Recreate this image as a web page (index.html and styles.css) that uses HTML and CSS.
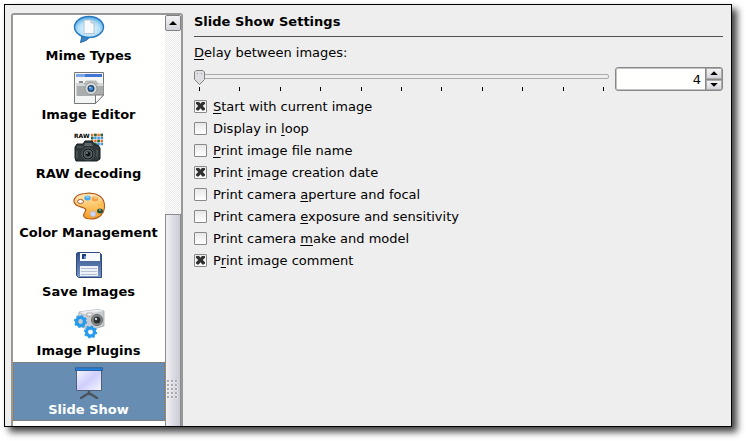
FILE: index.html
```html
<!DOCTYPE html>
<html lang="en">
<head>
    <meta charset="UTF-8">
    <meta name="viewport" content="width=device-width, initial-scale=1.0">
    <title>Slide Show Settings</title>
    <link rel="stylesheet" href="styles.css">
</head>
<body>
    <div class="window">
        <nav class="sidebar">
            <ul class="pages">
                <li><a href="#mime" class="page">
                    <svg class="icon" viewBox="0 0 32 32">
                        <defs>
                            <radialGradient id="bubble" cx=".5" cy=".6" r=".6"><stop offset="0" stop-color="#f2fbff"/><stop offset=".6" stop-color="#b4e0fa"/><stop offset="1" stop-color="#4ba3e4"/></radialGradient>
                        </defs>
                        <path d="M9 23L7.500 29.500Q14 28 17 24Z" fill="#3b84c8" stroke="#2466a8"/>
                        <ellipse cx="16" cy="14" rx="14.5" ry="10.5" fill="url(#bubble)" stroke="#2878bd" stroke-width="1.4"/>
                        <path d="M11 7H18L21 10V20.500H11Z" fill="#f8fafc" stroke="#a9b9c9" stroke-width=".8"/>
                        <path d="M18 7V10H21" fill="#dde5ec" stroke="#a9b9c9" stroke-width=".8"/>
                    </svg>
                    <span>Mime Types</span>
                </a></li>
                <li><a href="#editor" class="page">
                    <svg class="icon" viewBox="0 0 32 32">
                        <path d="M1.500 .5H30.500V23L22.500 31.500H1.500Z" fill="#f3f4f4" stroke="#777"/>
                        <path d="M3 2H29V5H3Z" fill="#3f76d4"/>
                        <path d="M3 2H12V5H3Z" fill="#7ba6e6"/>
                        <path d="M6 9H10V11H6Z" fill="#888"/>
                        <rect x="3.500" y="11" width="27" height="13" fill="#a9adad"/>
                        <path d="M3.500 11H30V14H3.500Z" fill="#d5d8d8"/>
                        <path d="M13 9H23L25 12H11Z" fill="#c3c7c7" stroke="#999" stroke-width=".6"/>
                        <circle cx="18" cy="16.500" r="6" fill="#d6dada" stroke="#888" stroke-width=".8"/>
                        <circle cx="18" cy="16.500" r="3.500" fill="#27486f"/>
                        <circle cx="18" cy="16.500" r="2" fill="#3f8ed8"/>
                        <circle cx="17" cy="15.500" r=".8" fill="#c8e8ff"/>
                        <path d="M22.500 31.500V23H30.500Z" fill="#fff" stroke="#777"/>
                    </svg>
                    <span>Image Editor</span>
                </a></li>
                <li><a href="#raw" class="page">
                    <svg class="icon" viewBox="0 0 32 32">
                        <text x="1" y="7" class="raw-text">RAW</text>
                        <path d="M18 4H30M18 10H30" stroke="#e2702c" stroke-width="2.400" stroke-dasharray="2.400 .8"/>
                        <path d="M18 7H30M18 13H30" stroke="#3e96e4" stroke-width="2.400" stroke-dasharray="2.400 .8"/>
                        <path d="M21.200 4H23.600M27.600 4H30M18 7H20.400M24.400 10H26.800M21.200 13H23.600" stroke="#226a40" stroke-width="2.400"/>
                        <path d="M2 16L4 13H10L12 10H19L22 14H25L27 17V28L24 30H3L2 27Z" fill="#30383b" stroke="#171c1f"/>
                        <path d="M12 12H18L20 15H11Z" fill="#5b6669"/>
                        <path d="M4 16H10M4 20V27M24 19V26" stroke="#4c585c" stroke-width="1.500"/>
                        <circle cx="15" cy="23" r="6" fill="#111719" stroke="#59666a"/>
                        <circle cx="15" cy="23" r="4" fill="#37454a" stroke="#7c888c" stroke-width=".7"/>
                        <circle cx="15" cy="23" r="2" fill="#0a1013"/>
                        <circle cx="14" cy="22" r=".8" fill="#b6c9d0"/>
                    </svg>
                    <span>RAW decoding</span>
                </a></li>
                <li><a href="#color" class="page">
                    <svg class="icon" viewBox="0 0 32 32">
                        <defs>
                            <linearGradient id="palette" x1="0" y1="0" x2="0" y2="1"><stop offset="0" stop-color="#ffe9bd"/><stop offset=".6" stop-color="#fbbd55"/><stop offset="1" stop-color="#f39a24"/></linearGradient>
                        </defs>
                        <path d="M3 15C-2 10 3 4 12 3.500C24 2 31.500 7 31.500 16C31.500 24 26 29 18 29C11 29 9 26 12 22C15 17 8 18 3 15Z" fill="url(#palette)" stroke="#b25a1c" stroke-width="1.200"/>
                        <ellipse cx="7.500" cy="11.500" rx="3" ry="2" fill="#fffefc" stroke="#a3592b"/>
                        <ellipse cx="14.500" cy="8" rx="3.200" ry="2.500" fill="#46acf2"/>
                        <ellipse cx="22" cy="9" rx="3.200" ry="2.500" fill="#f3a03d"/>
                        <ellipse cx="27.500" cy="14" rx="2.700" ry="2.700" fill="#ffbb45"/>
                        <ellipse cx="27" cy="21" rx="3" ry="2.500" fill="#23513a"/>
                        <circle cx="20" cy="24" r="2.800" fill="#d0d5f8" stroke="#a8aede" stroke-width=".6"/>
                        <path d="M13 7H16M21 8H24M26 13H28M26 20H28" stroke="#fff" stroke-width="1" opacity=".7"/>
                    </svg>
                    <span>Color Management</span>
                </a></li>
                <li><a href="#save" class="page">
                    <svg class="icon" viewBox="0 0 32 32">
                        <defs>
                            <linearGradient id="disk" x1="0" y1="0" x2="0" y2="1"><stop offset="0" stop-color="#2f4f8d"/><stop offset="1" stop-color="#7d98c4"/></linearGradient>
                        </defs>
                        <path d="M4.500 3.500H26.500L28.500 5.500V28.500H5.500L3.500 26.500V4.500Z" fill="url(#disk)" stroke="#304a7d"/>
                        <path d="M7 4H27V12H7Z" fill="#f8f9fc"/>
                        <path d="M9 5H13V10H9Z" fill="#1e3c78"/>
                        <path d="M11 7H13V10H11Z" fill="#7798ce"/>
                        <path d="M7 17H25V27H7Z" fill="#eef1f8"/>
                        <path d="M8 19.500H24M8 22.500H24M8 25.500H24" stroke="#b4bfd6"/>
                    </svg>
                    <span>Save Images</span>
                </a></li>
                <li><a href="#plugins" class="page">
                    <svg class="icon" viewBox="0 0 32 32">
                        <path d="M6 4L25 1.500L31 3V18L18 22L5 18Z" fill="#c8cbcf" stroke="#a5a9ad" stroke-width=".8"/>
                        <path d="M6 4L25 1.500L31 3L12 6Z" fill="#eceef0"/>
                        <path d="M14 5H19V8H14Z" fill="#fafafa" stroke="#888" stroke-width=".6"/>
                        <circle cx="24" cy="12" r="5.500" fill="#8b8e8d" stroke="#666"/>
                        <circle cx="24" cy="12" r="3.500" fill="#292e30"/>
                        <circle cx="23" cy="11" r="1.200" fill="#cfd8d9"/>
                        <circle cx="7.500" cy="13.500" r="4" fill="none" stroke="#249bed" stroke-width="3.200"/>
                        <circle cx="7.500" cy="13.500" r="5.800" fill="none" stroke="#249bed" stroke-width="1.600" stroke-dasharray="2.200 2.300"/>
                        <circle cx="17.500" cy="24" r="4" fill="none" stroke="#249bed" stroke-width="3.200"/>
                        <circle cx="17.500" cy="24" r="5.800" fill="none" stroke="#249bed" stroke-width="1.600" stroke-dasharray="2.200 2.300"/>
                    </svg>
                    <span>Image Plugins</span>
                </a></li>
                <li><a href="#slideshow" class="page selected">
                    <svg class="icon" viewBox="0 0 32 32">
                        <defs>
                            <linearGradient id="screen" x1="0" y1="0" x2="1" y2="1"><stop offset="0" stop-color="#f5f5ff"/><stop offset=".5" stop-color="#cfcffd"/><stop offset="1" stop-color="#f6f6ff"/></linearGradient>
                        </defs>
                        <path d="M16 23V27M16 26L8 31M16 26L24 31" fill="none" stroke="#4c535d" stroke-width="2.400" stroke-linecap="round"/>
                        <path d="M3.500 3H28.500V23.500H3.500Z" fill="url(#screen)" stroke="#525f79"/>
                        <path d="M2.500 .8H29.500V3.500H2.500Z" fill="#2482dc" stroke="#23528c" stroke-width=".8"/>
                    </svg>
                    <span>Slide Show</span>
                </a></li>
            </ul>
            <div class="scrollbar">
                <button type="button" class="scroll-up" aria-label="Scroll up"><i class="arrow up"></i></button>
                <div class="scroll-thumb"><div class="grip"></div></div>
            </div>
        </nav>
        <form class="settings">
            <h1>Slide Show Settings</h1>
            <label class="delay-label" for="delay"><u>D</u>elay between images:</label>
            <div class="delay">
                <div class="slider">
                    <input type="range" id="delay" min="4" max="3600" value="4">
                    <div class="ticks">
                        <i></i><i></i><i></i><i></i><i></i><i></i><i></i><i></i><i></i><i></i><i></i>
                    </div>
                </div>
                <div class="spinbox">
                    <input type="text" id="seconds" value="4" aria-label="Delay in seconds">
                    <div class="steps">
                        <button type="button" id="stepUp" aria-label="Increase"><i class="arrow up"></i></button>
                        <button type="button" id="stepDown" aria-label="Decrease"><i class="arrow down"></i></button>
                    </div>
                </div>
            </div>
            <div class="options">
                <label><input type="checkbox" checked><span><u>S</u>tart with current image</span></label>
                <label><input type="checkbox"><span>Display in <u>l</u>oop</span></label>
                <label><input type="checkbox"><span><u>P</u>rint image file name</span></label>
                <label><input type="checkbox" checked><span>Print <u>i</u>mage creation date</span></label>
                <label><input type="checkbox"><span>Print camera <u>a</u>perture and focal</span></label>
                <label><input type="checkbox"><span>Print camera <u>e</u>xposure and sensitivity</span></label>
                <label><input type="checkbox"><span>Print camera <u>m</u>ake and model</span></label>
                <label><input type="checkbox" checked><span>P<u>r</u>int image comment</span></label>
            </div>
        </form>
    </div>
    <script>
        var slider = document.getElementById("delay");
        var seconds = document.getElementById("seconds");

        // Keep the slider and the number box on the same value
        function setDelay(value) {
            slider.value = value;
            seconds.value = slider.value;
        }

        slider.addEventListener("input", function() {
            setDelay(slider.value);
        });
        seconds.addEventListener("change", function() {
            setDelay(seconds.value);
        });
        document.getElementById("stepUp").addEventListener("click", function() {
            setDelay(Number(slider.value) + 1);
        });
        document.getElementById("stepDown").addEventListener("click", function() {
            setDelay(Number(slider.value) - 1);
        });
    </script>
</body>
</html>
```
FILE: styles.css
```css
* {
    box-sizing: border-box;
}
body {
    margin: 0;
    padding: 4px 14px 14px 4px; /* Room for the window shadow */
    height: 100vh;
    background-color: #fff;
    color: #000;
    font-family: "DejaVu Sans", sans-serif;
    font-size: 13px;
    line-height: 16px;
}
.window {
    display: flex;
    gap: 11px;
    height: 100%;
    padding: 8px 8px 0 6px;
    border: 1px solid #000;
    background-color: #eee;
    box-shadow: 5px 5px 7px rgba(0, 0, 0, 0.75);
    overflow: hidden;
}
/* Page list */
.sidebar {
    display: flex;
    flex: none;
    width: 172px;
    border: 2px solid #989898;
    border-bottom: none;
    border-radius: 3px 3px 0 0;
    background-color: #fffffd;
    overflow: hidden;
}
.pages {
    flex: 1;
    margin: -7px 0 0; /* List is scrolled past the first pages */
    padding: 0;
    list-style: none;
}
.page {
    display: flex;
    flex-direction: column;
    align-items: center;
    gap: 3px;
    height: 59px;
    padding: 5px 1px 0 0;
    color: #000;
    font-weight: bold;
    text-decoration: none;
    white-space: nowrap;
}
.page.selected {
    background-color: #678db2;
    color: #fff;
    outline: 1px dotted #98724d;
    outline-offset: -1px;
}
.icon {
    width: 32px;
    height: 32px;
}
.raw-text {
    font-size: 6px;
    font-weight: bold;
}
.scrollbar {
    display: flex;
    flex-direction: column;
    justify-content: space-between;
    flex: none;
    width: 16px;
    background: repeating-conic-gradient(#eaeaea 0 25%, #fff 0 50%) 0 0 / 2px 2px;
}
.scroll-up {
    height: 16px;
    padding: 0;
    border: 1px solid #808080;
    border-radius: 2px;
    background: linear-gradient(#f4f4f6, #d2d2da);
}
.scroll-thumb {
    height: 212px;
    padding-top: 165px;
    border: 1px solid #8c8c8c;
    border-bottom: none;
    background: linear-gradient(to right, #f0f0f4, #c9cad4);
}
.grip {
    height: 20px;
    margin: 0 1px;
    background: radial-gradient(circle at 1px 1px, #aaa 1px, #fff 1px, transparent 2px) 0 0 / 4px 4px;
}
.arrow {
    display: block;
    width: 8px;
    height: 4px;
    margin: 0 auto;
    background-color: #000;
}
.arrow.up {
    clip-path: polygon(50% 0, 100% 100%, 0 100%);
}
.arrow.down {
    clip-path: polygon(0 0, 100% 0, 50% 100%);
}
/* Settings pane */
.settings {
    flex: 1;
    min-width: 0;
}
h1 {
    margin: 0 0 8px;
    padding-bottom: 5px;
    border-bottom: 1px solid #505050;
    font-size: 13px;
    line-height: 18px;
}
.delay-label {
    display: block;
    line-height: 16px;
}
u {
    text-underline-offset: 2px;
}
.delay {
    display: flex;
    gap: 6px;
    margin-top: 6px;
}
.slider {
    flex: 1;
    padding-top: 2px;
}
.slider input {
    display: block;
    appearance: none;
    width: 100%;
    height: 15px;
    margin: 0;
    background: none;
}
.slider input::-webkit-slider-runnable-track {
    height: 5px;
    border: 1px solid #aaa;
    border-radius: 2px;
    background-color: #eee;
}
.slider input::-webkit-slider-thumb {
    appearance: none;
    width: 11px;
    height: 15px;
    margin: -5px 0 0 -1px;
    background: url("data:image/svg+xml,%3Csvg xmlns='http://www.w3.org/2000/svg' viewBox='0 0 11 15'%3E%3Cpath d='M2 .5H9L10.500 2V9.500L5.500 14.500L.5 9.500V2Z' fill='%23dedee2' stroke='%23808080'/%3E%3Cpath d='M3 3.500H4M7 3.500H8' stroke='%23999'/%3E%3C/svg%3E");
}
.ticks {
    display: flex;
    justify-content: space-between;
    margin-top: 3px;
    padding: 0 5px;
}
.ticks i {
    width: 1px;
    height: 4px;
    background-color: #000;
}
.spinbox {
    display: flex;
    width: 108px;
    height: 24px;
    border: 1px solid #888;
    border-radius: 3px;
    background-color: #fffffd;
    box-shadow: inset 0 0 0 1px #c4c4c4;
    overflow: hidden;
}
.spinbox input {
    flex: 1;
    min-width: 0;
    padding: 2px 4px 0;
    border: none;
    background: none;
    font: inherit;
    text-align: right;
}
.steps {
    display: flex;
    flex-direction: column;
    gap: 1px;
    width: 17px;
    background-color: #888;
    border-left: 1px solid #888;
}
.steps button {
    flex: 1;
    padding: 0;
    border: 1px solid #aaa;
    background: linear-gradient(#f4f4f6, #d4d4dc);
}
.options {
    display: flex;
    flex-direction: column;
    align-items: flex-start;
    margin-top: 4px;
}
.options label {
    display: flex;
    align-items: center;
    gap: 6px;
    height: 22px;
}
.options span {
    padding-top: 2px;
}
.options input {
    appearance: none;
    width: 13px;
    height: 13px;
    margin: 0;
    border: 1px solid #888;
    border-radius: 1px;
    background: linear-gradient(#e8e8e8, #fff);
}
.options input:checked::before {
    content: "";
    display: block;
    width: 9px;
    height: 9px;
    margin: 1px;
    background-color: #303030;
    clip-path: polygon(0 12%, 12% 0, 30% 0, 50% 25%, 70% 0, 88% 0, 100% 12%, 100% 25%, 75% 50%, 100% 75%, 100% 88%, 88% 100%, 70% 100%, 50% 75%, 30% 100%, 12% 100%, 0 88%, 0 75%, 25% 50%, 0 25%);
}
```
